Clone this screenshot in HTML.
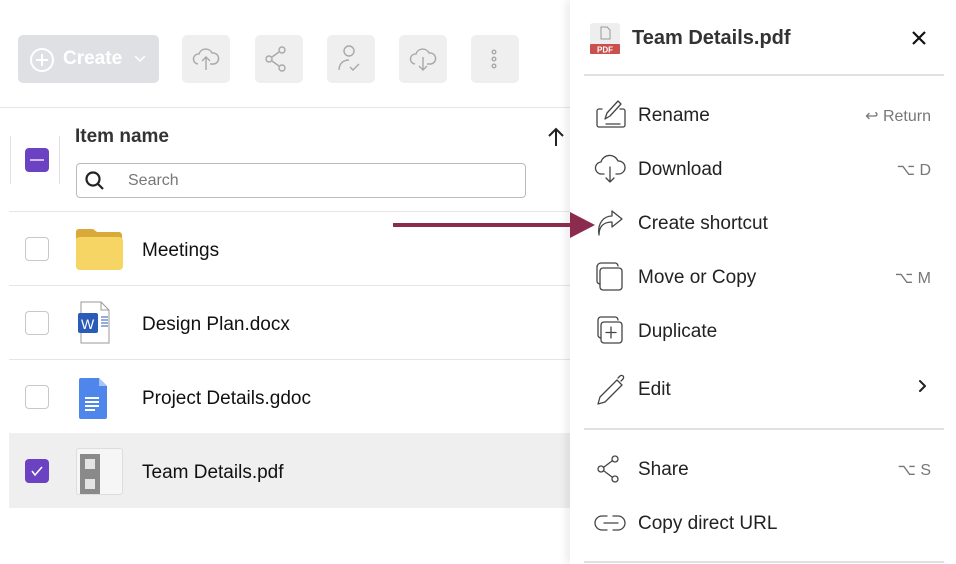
<!DOCTYPE html><html><head><style>
body{margin:0;width:956px;height:564px;overflow:hidden;background:#fff;font-family:"Liberation Sans",sans-serif;position:relative;color:#222}
.a{position:absolute}
.tb{position:absolute;top:35px;width:48px;height:48px;background:#efefef;border-radius:5px}
.cb{position:absolute;left:25px;width:22px;height:22px;border:1.5px solid #c8c8c8;border-radius:4px;background:#fff}
.hl{position:absolute;height:1px;background:#e6e6e6}
.nm{position:absolute;left:142px;font-size:19px;color:#111}
.mi{position:absolute;left:638px;font-size:19px;color:#222}
.sc{position:absolute;right:25px;font-size:16px;color:#777}
</style></head><body>
<div class="a" style="left:18px;top:35px;width:141px;height:48px;background:#dfe0e3;border-radius:5px"></div>
<svg class="a" style="left:28px;top:46px" width="28" height="28" viewBox="0 0 28 28" fill="none" stroke="#fff" stroke-width="2"><circle cx="14" cy="14" r="11"/><path d="M14 8v12M8 14h12"/></svg>
<div class="a" style="left:63px;top:48px;font-size:19px;font-weight:bold;color:#fff">Create</div>
<svg class="a" style="left:134px;top:54px" width="12" height="10" fill="none" stroke="#fff" stroke-width="1.5"><path d="M1 2l5 5 5-5"/></svg>
<div class="tb" style="left:182px"></div><div class="tb" style="left:255px"></div><div class="tb" style="left:327px"></div><div class="tb" style="left:399px"></div><div class="tb" style="left:471px"></div>
<svg class="a" style="left:190px;top:44px" width="330" height="30" fill="none" stroke="#a8a8a8" stroke-width="1.4">
<path d="M8 20a5 5 0 0 1 1-10 7 7 0 0 1 13-1 5 5 0 0 1 2 11h-4M16 26V13M12 17l4-4 4 4"/>
<g transform="translate(73,0)"><circle cx="6" cy="15" r="3"/><circle cx="19" cy="6" r="3"/><circle cx="19" cy="24" r="3"/><path d="M9 13l7-5M9 17l7 5"/></g>
<g transform="translate(145,0)"><circle cx="14" cy="7" r="5"/><path d="M4 26c0-6 4-10 10-10M15 23l3 3 6-6"/></g>
<g transform="translate(217,0)"><path d="M8 20a5 5 0 0 1 1-10 7 7 0 0 1 13-1 5 5 0 0 1 2 11h-4M16 13v13M12 22l4 4 4-4"/></g>
<g transform="translate(289,0)"><circle cx="15" cy="8" r="1.8"/><circle cx="15" cy="15" r="1.8"/><circle cx="15" cy="22" r="1.8"/></g>
</svg>
<div class="hl" style="left:0;top:107px;width:572px"></div>
<div class="a" style="left:10px;top:136px;width:1px;height:48px;background:#e0e0e0"></div>
<div class="a" style="left:59px;top:136px;width:1px;height:48px;background:#e0e0e0"></div>
<div class="a" style="left:25px;top:148px;width:24px;height:24px;background:#6a42c2;border-radius:4px"></div>
<div class="a" style="left:30px;top:159px;width:14px;height:2px;background:#cbbdf0"></div>
<div class="a" style="left:75px;top:126px;font-size:19px;font-weight:bold;color:#333">Item name</div>
<svg class="a" style="left:546px;top:126px" width="20" height="22" fill="none" stroke="#222" stroke-width="2"><path d="M10 20V3M3 10l7-7 7 7"/></svg>
<div class="a" style="left:76px;top:163px;width:448px;height:33px;border:1px solid #bbb;border-radius:4px"></div>
<svg class="a" style="left:84px;top:170px" width="22" height="22" fill="none" stroke="#222" stroke-width="2.2"><circle cx="9" cy="9" r="6.5"/><path d="M14 14l5 5"/></svg>
<div class="a" style="left:128px;top:172px;font-size:16px;color:#777">Search</div>
<div class="hl" style="left:9px;top:211px;width:563px"></div>
<div class="hl" style="left:9px;top:285px;width:563px"></div>
<div class="hl" style="left:9px;top:359px;width:563px"></div>
<div class="a" style="left:9px;top:433px;width:563px;height:75px;background:#efefef"></div>
<div class="cb" style="top:237px"></div><div class="cb" style="top:311px"></div><div class="cb" style="top:385px"></div>
<div class="a" style="left:25px;top:459px;width:24px;height:24px;background:#6a42c2;border-radius:4px"></div>
<svg class="a" style="left:25px;top:459px" width="24" height="24" fill="none" stroke="#fff" stroke-width="1.5"><path d="M7 12l3 4 7-8"/></svg>
<svg class="a" style="left:75px;top:226px" width="50" height="46"><path d="M1 6a3 3 0 0 1 3-3h14l4 3h21a4 4 0 0 1 4 4v30a4 4 0 0 1-4 4H5a4 4 0 0 1-4-4z" fill="#f7d564"/><path d="M1 6a3 3 0 0 1 3-3h14l4 3h22a3 3 0 0 1 3 3v3H1z" fill="#d9a93a"/><rect x="1" y="11" width="47" height="33" rx="4" fill="#f7d564"/></svg>
<svg class="a" style="left:73px;top:300px" width="50" height="46"><path d="M8 2h20l8 8v33H8z" fill="#fff" stroke="#999"/><path d="M28 2v8h8" fill="none" stroke="#999"/><rect x="5" y="13" width="20" height="20" rx="2" fill="#2b5bb8"/><text x="8" y="29" font-size="14" fill="#fff" font-family="Liberation Sans">W</text><path d="M28 17h7M28 20h7M28 23h7M28 26h7" stroke="#2b5bb8"/></svg>
<svg class="a" style="left:78px;top:376px" width="40" height="44"><path d="M3 2h18l8 8v31a2 2 0 0 1-2 2H3a2 2 0 0 1-2-2V4a2 2 0 0 1 2-2z" fill="#4f86ec"/><path d="M21 2v8h8z" fill="#a8c4f5"/><path d="M7 22h14M7 26h14M7 30h14M7 34h10" stroke="#fff" stroke-width="2"/></svg>
<div class="a" style="left:76px;top:448px;width:45px;height:45px;background:#f6f6f6;border:1px solid #ddd;border-radius:3px"></div>
<div class="a" style="left:80px;top:454px;width:20px;height:20px;border:5px solid #8a8a8a;box-sizing:border-box;background:#e4e4e4"></div>
<div class="a" style="left:80px;top:474px;width:20px;height:20px;border:5px solid #8a8a8a;box-sizing:border-box;background:#e4e4e4"></div>
<div class="nm" style="top:240px">Meetings</div>
<div class="nm" style="top:314px">Design Plan.docx</div>
<div class="nm" style="top:388px">Project Details.gdoc</div>
<div class="nm" style="top:462px">Team Details.pdf</div>
<div class="a" style="left:570px;top:0;width:386px;height:564px;background:#fff;box-shadow:-4px 0 8px rgba(0,0,0,0.08)"></div>
<div class="a" style="left:393px;top:223px;width:180px;height:4px;background:#8b2c4f"></div>
<svg class="a" style="left:570px;top:212px" width="26" height="26"><path d="M0 0L25 13L0 26z" fill="#8b2c4f"/></svg>
<svg class="a" style="left:589px;top:23px" width="32" height="32"><rect x="1" y="0" width="30" height="31" rx="3" fill="#eee"/><path d="M12 4h6l3 3v9h-9z" fill="none" stroke="#999"/><rect x="1" y="21" width="30" height="10" rx="1" fill="#c9504d"/><text x="8" y="29.5" font-size="8" font-weight="bold" fill="#fff" font-family="Liberation Sans">PDF</text></svg>
<div class="a" style="left:632px;top:27px;font-size:20px;font-weight:bold;color:#333">Team Details.pdf</div>
<svg class="a" style="left:911px;top:30px" width="16" height="16" stroke="#111" stroke-width="2.2"><path d="M2 2l12 12M14 2L2 14"/></svg>
<div class="hl" style="left:584px;top:74px;width:360px;height:2px;background:#e0e0e0"></div>
<div class="hl" style="left:584px;top:428px;width:360px;height:2px;background:#e0e0e0"></div>
<div class="hl" style="left:584px;top:561px;width:360px;height:2px;background:#e0e0e0"></div>
<svg class="a" style="left:594px;top:98px" width="340" height="440" fill="none" stroke="#444" stroke-width="1.3" stroke-linecap="round" stroke-linejoin="round">
<path d="M8 11H5a2 2 0 0 0-2 2v14a2 2 0 0 0 2 2h24a2 2 0 0 0 2-2V13a2 2 0 0 0-2-2h-3M11 21l2-6 11-12 3 3-11 12zM12 26h14"/>
<g transform="translate(0,54)"><path d="M10 22H8a6 6 0 0 1-1-12 9 9 0 0 1 17-1 6 6 0 0 1 1 13h-3M16 15v15M12 26l4 4 4-4"/></g>
<g transform="translate(0,108)"><path d="M5 29c0-9 5-13 13-13v5l10-8-10-8v5C10 10 3 17 5 29z"/></g>
<g transform="translate(0,162)"><rect x="6" y="8" width="22" height="22" rx="3"/><path d="M6 24a3 3 0 0 1-3-3V7a4 4 0 0 1 4-4h14a3 3 0 0 1 3 3"/></g>
<g transform="translate(0,216)"><rect x="7" y="8" width="21" height="21" rx="3"/><path d="M7 24a3 3 0 0 1-3-3V6a3 3 0 0 1 3-3h14a3 3 0 0 1 3 3M17 13v11M12 18.5h10"/></g>
<g transform="translate(0,274)"><path d="M4 32l2-7 17-17 5 5-17 17zM24 6l2-2a2 2 0 0 1 3 3l-2 2"/></g>
<g transform="translate(0,354)"><circle cx="7" cy="17" r="3"/><circle cx="21" cy="7" r="3"/><circle cx="21" cy="27" r="3"/><path d="M10 15l8-6M10 19l8 6"/></g>
<g transform="translate(0,408)"><path d="M13 10H8a7 7 0 0 0 0 14h5M19 10h5a7 7 0 0 1 0 14h-5M10 17h14"/></g>
<g transform="translate(325,282)"><path d="M1 1l5 5-5 5" stroke="#222" stroke-width="2"/></g>
</svg>
<div class="mi" style="top:105px">Rename</div><div class="sc" style="top:106px">↩ Return</div>
<div class="mi" style="top:159px">Download</div><div class="sc" style="top:160px">⌥ D</div>
<div class="mi" style="top:213px">Create shortcut</div>
<div class="mi" style="top:267px">Move or Copy</div><div class="sc" style="top:268px">⌥ M</div>
<div class="mi" style="top:321px">Duplicate</div>
<div class="mi" style="top:379px">Edit</div>
<div class="mi" style="top:459px">Share</div><div class="sc" style="top:460px">⌥ S</div>
<div class="mi" style="top:513px">Copy direct URL</div>
</body></html>
